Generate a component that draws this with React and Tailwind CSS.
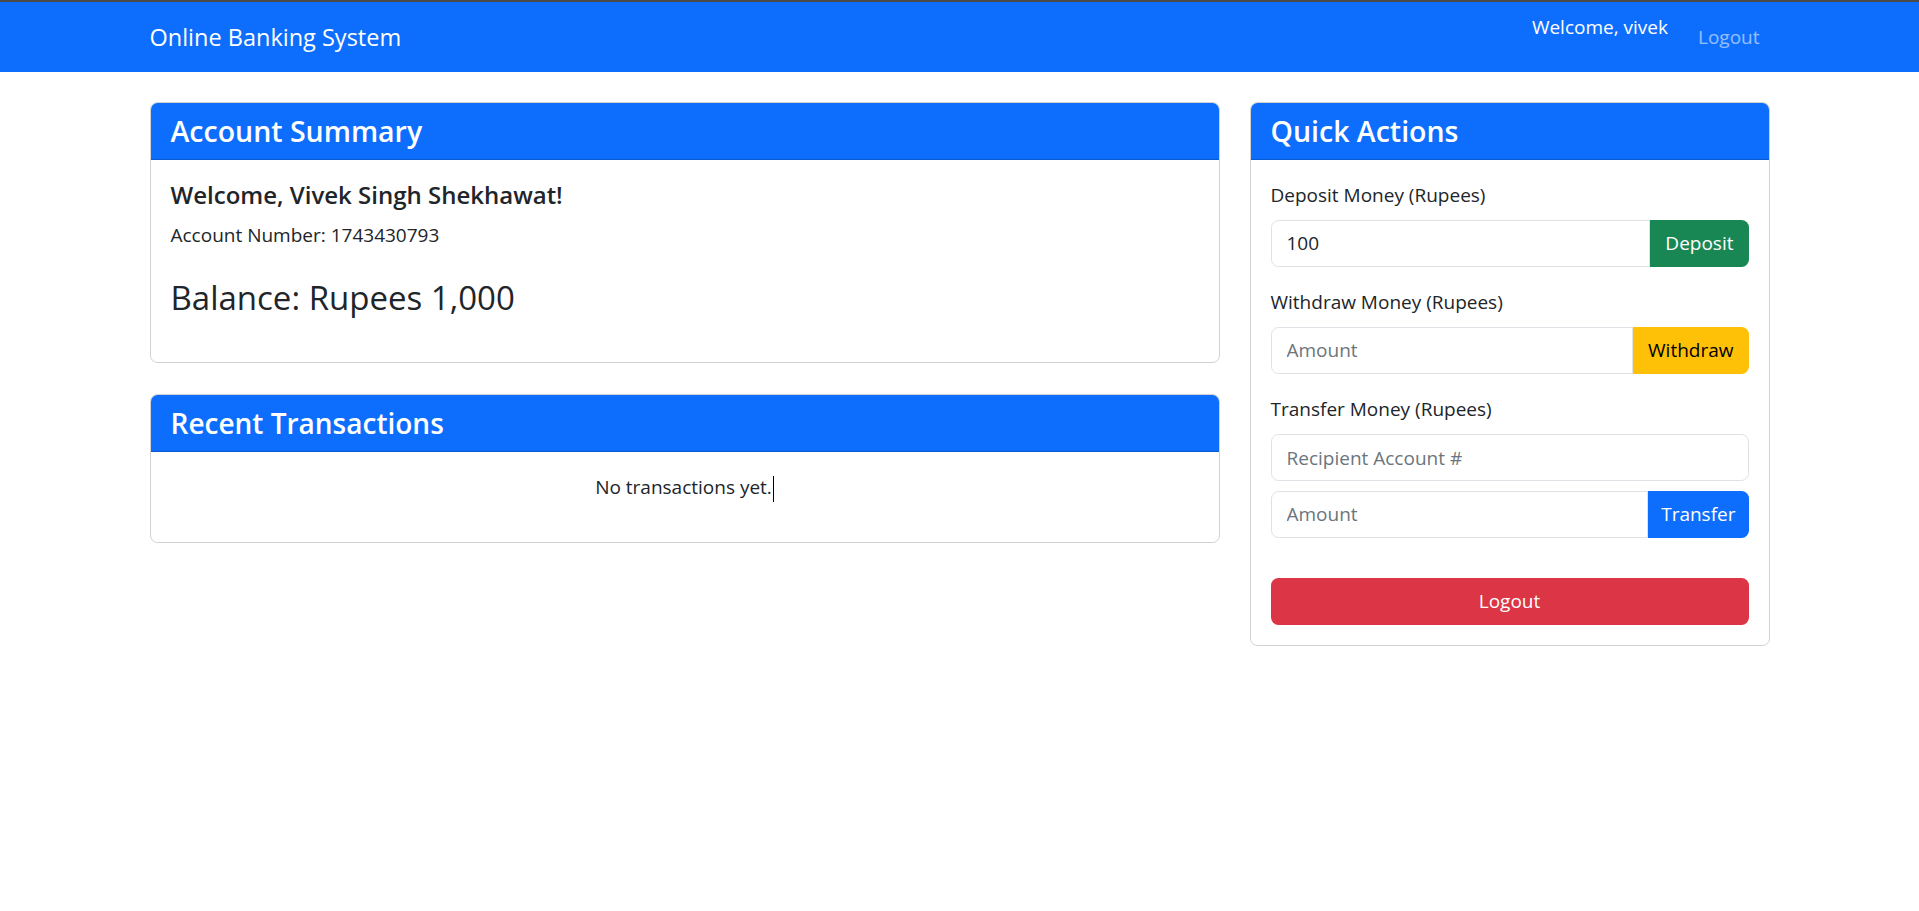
export default function App() {
  return (
    <div className="min-h-screen bg-white text-[#212529] font-['Open_Sans',sans-serif]">
      <nav className="h-[72px] border-t-2 border-[#4a4a4a] bg-[#0d6efd]">
        <div className="mx-auto flex w-[1620px] items-start justify-between pt-[10px]">
          <span className="py-[6px] text-[23.5px] leading-[38px] text-white">Online Banking System</span>
          <div className="flex items-start">
            <span className="mr-[20px] text-[19px] leading-[30px] text-white">Welcome, vivek</span>
            <a href="#" className="px-[10px] py-[10px] text-[19px] leading-[30px] text-white/55">
              Logout
            </a>
          </div>
        </div>
      </nav>

      <div className="mx-auto mt-[30px] flex w-[1620px] items-start gap-[30px]">
        {/* left column */}
        <div className="flex w-[1070px] flex-col gap-[31px]">
          <div className="overflow-hidden rounded-[7.5px] border border-black/[0.175]">
            <div className="border-b border-black/[0.175] bg-[#0d6efd] px-[20px] py-[10px]">
              <h4 className="text-[28.5px] font-semibold leading-[36px] text-white">Account Summary</h4>
            </div>
            <div className="p-[20px]">
              <h5 className="mb-[10px] text-[24px] font-semibold leading-[30px]">Welcome, Vivek Singh Shekhawat!</h5>
              <p className="mb-[27px] text-[19px] leading-[30px]">Account Number: 1743430793</p>
              <h3 className="mb-[23px] text-[33px] leading-[42px]">Balance: Rupees 1,000</h3>
            </div>
          </div>

          <div className="overflow-hidden rounded-[7.5px] border border-black/[0.175]">
            <div className="border-b border-black/[0.175] bg-[#0d6efd] px-[20px] py-[10px]">
              <h4 className="text-[28px] font-semibold leading-[36px] text-white">Recent Transactions</h4>
            </div>
            <div className="p-[20px] pb-[40px] text-center">
              <p className="text-[19px] leading-[30px]">
                No transactions yet.
                <span className="ml-px inline-block h-[26px] w-px bg-black align-middle" />
              </p>
            </div>
          </div>
        </div>

        {/* right column */}
        <div className="w-[520px] overflow-hidden rounded-[7.5px] border border-black/[0.175]">
          <div className="border-b border-black/[0.175] bg-[#0d6efd] px-[20px] py-[10px]">
            <h4 className="text-[28.5px] font-semibold leading-[36px] text-white">Quick Actions</h4>
          </div>
          <div className="p-[20px] text-[19px]">
            <label className="mb-[10px] block leading-[30px]">Deposit Money (Rupees)</label>
            <div className="mb-[20px] flex h-[47px]">
              <input
                type="text"
                defaultValue="100"
                className="min-w-0 flex-1 rounded-l-[7.5px] border border-[#dee2e6] px-[15px] text-[#212529] outline-none"
              />
              <button className="rounded-r-[7.5px] bg-[#198754] px-[15px] text-white">Deposit</button>
            </div>

            <label className="mb-[10px] block leading-[30px]">Withdraw Money (Rupees)</label>
            <div className="mb-[20px] flex h-[47px]">
              <input
                type="text"
                placeholder="Amount"
                className="min-w-0 flex-1 rounded-l-[7.5px] border border-[#dee2e6] px-[15px] outline-none placeholder:text-[#6c757d]"
              />
              <button className="rounded-r-[7.5px] bg-[#ffc107] px-[15px] text-black">Withdraw</button>
            </div>

            <label className="mb-[10px] block leading-[30px]">Transfer Money (Rupees)</label>
            <input
              type="text"
              placeholder="Recipient Account #"
              className="mb-[10px] block h-[47px] w-full rounded-[7.5px] border border-[#dee2e6] px-[15px] outline-none placeholder:text-[#6c757d]"
            />
            <div className="flex h-[47px]">
              <input
                type="text"
                placeholder="Amount"
                className="min-w-0 flex-1 rounded-l-[7.5px] border border-[#dee2e6] px-[15px] outline-none placeholder:text-[#6c757d]"
              />
              <button className="rounded-r-[7.5px] bg-[#0d6efd] px-[13px] text-white">Transfer</button>
            </div>

            <button className="mt-[40px] block h-[47px] w-full rounded-[7.5px] bg-[#dc3545] text-white">Logout</button>
          </div>
        </div>
      </div>
    </div>
  );
}
